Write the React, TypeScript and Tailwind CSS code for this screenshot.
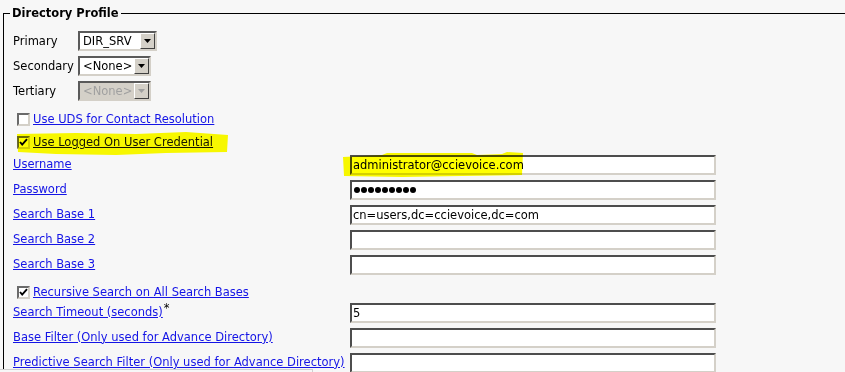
import React from "react";

const LINK = "text-[#1414e6] underline underline-offset-[1px] decoration-[1px]";

function Check({ checked }: { checked?: boolean }) {
  return (
    <div className="w-[13px] h-[13px] box-border border-2 border-t-[#6a6a6a] border-l-[#6a6a6a] border-b-[#d4d0c8] border-r-[#d4d0c8] bg-white flex items-center justify-center shrink-0">
      {checked && (
        <svg width="9" height="9" viewBox="0 0 9 9">
          <path d="M1 4 L3.2 6.6 L8 1.2" fill="none" stroke="#000" strokeWidth="1.9" />
        </svg>
      )}
    </div>
  );
}

function Select({ value, width, disabled }: { value: string; width: string; disabled?: boolean }) {
  return (
    <div
      className={`${width} h-[20px] box-border border-2 border-t-[#5a5a5a] border-l-[#5a5a5a] border-b-[#d4d0c8] border-r-[#d4d0c8] flex items-stretch ${
        disabled ? "bg-[#d4d0c8]" : "bg-white"
      }`}
    >
      <div className={`flex-1 pl-[3px] leading-[16px] whitespace-nowrap overflow-hidden ${disabled ? "text-[#a0a0a0]" : "text-black"}`}>{value}</div>
      <div className="w-[15px] box-border border border-t-white border-l-white border-b-[#404040] border-r-[#404040] bg-[#d4d0c8] flex items-center justify-center shrink-0">
        <svg width="7" height="4" viewBox="0 0 7 4">
          <path d="M0 0 H7 L3.5 4 Z" fill={disabled ? "#a0a0a0" : "#000"} />
        </svg>
      </div>
    </div>
  );
}

function Field({ label, star, children }: { label: string; star?: boolean; children?: React.ReactNode }) {
  return (
    <div className="flex h-[25px] items-start">
      <div className="w-[337px] pt-[1px] whitespace-nowrap">
        <span className={LINK}>{label}</span>
        {star && <span className="relative top-[-4px] text-black ml-[1px]">*</span>}
      </div>
      <div className="w-[366px] h-[20px] box-border border-2 border-t-[#4d4d4d] border-l-[#4d4d4d] border-b-[#d4d0c8] border-r-[#d4d0c8] bg-white pl-[1px] leading-[16px] text-black">
        {children}
      </div>
    </div>
  );
}

export default function App() {
  return (
    <div
      className="w-[845px] h-[372px] bg-[#f7f7f7] overflow-hidden relative text-[11.5px] text-black"
      style={{ fontFamily: '"DejaVu Sans", Verdana, sans-serif' }}
    >
      <fieldset className="mt-[5px] ml-[3px] w-[900px] border border-black pl-[9px] pb-[40px]">
        <legend className="ml-[-3px] px-[2px] font-bold text-[11.5px] leading-[16px]">Directory Profile</legend>

        <div className="mt-[10px] flex flex-col">
          <div className="flex h-[25px] items-start">
            <div className="w-[65px] leading-[20px]">Primary</div>
            <Select value="DIR_SRV" width="w-[79px]" />
          </div>
          <div className="flex h-[25px] items-start">
            <div className="w-[65px] leading-[20px]">Secondary</div>
            <Select value="<None>" width="w-[73px]" />
          </div>
          <div className="flex h-[25px] items-start">
            <div className="w-[65px] leading-[20px]">Tertiary</div>
            <Select value="<None>" width="w-[73px]" disabled />
          </div>

          <div className="flex items-center h-[24px] pl-[4px] pt-[3px] gap-[3px]">
            <Check />
            <span className={LINK}>Use UDS for Contact Resolution</span>
          </div>
          <div className="flex items-center h-[25px] pl-[4px] gap-[3px]">
            <Check checked />
            <span className={LINK}>Use Logged On User Credential</span>
          </div>

          <Field label="Username">administrator@ccievoice.com</Field>
          <Field label="Password">
            <div className="flex gap-[1px] items-center h-full pl-[1px]">
              {Array.from({ length: 9 }).map((_, i) => (
                <span key={i} className="w-[6px] h-[6px] rounded-full bg-black" />
              ))}
            </div>
          </Field>
          <Field label="Search Base 1">cn=users,dc=ccievoice,dc=com</Field>
          <Field label="Search Base 2" />
          <Field label="Search Base 3" />

          <div className="flex items-center h-[23px] pl-[4px] pt-[2px] gap-[3px]">
            <Check checked />
            <span className={LINK}>Recursive Search on All Search Bases</span>
          </div>

          <Field label="Search Timeout (seconds)" star>
            5
          </Field>
          <Field label="Base Filter (Only used for Advance Directory)" />
          <Field label="Predictive Search Filter (Only used for Advance Directory)" />
        </div>
      </fieldset>

      {/* highlighter marks */}
      <svg
        className="absolute left-[16px] top-[131px] mix-blend-multiply pointer-events-none"
        width="214"
        height="25"
        viewBox="0 0 214 25"
      >
        <path
          d="M1 3 L60 2 L120 3 L170 1 L212 4 L211 21 L150 22 L100 24 L40 23 L2 21 Z"
          fill="#ffff00"
        />
      </svg>
      <svg
        className="absolute left-[342px] top-[151px] mix-blend-multiply pointer-events-none"
        width="182"
        height="27"
        viewBox="0 0 182 27"
      >
        <path
          d="M1 6 L40 4 L45 2 L130 2 L135 4 L160 3 L165 1 L181 2 L180 24 L120 25 L60 26 L2 25 Z"
          fill="#ffff00"
        />
      </svg>

      <div className="absolute left-0 top-[369px] w-[313px] h-[10px] bg-[#f7f7f7] border-t border-r border-[#d0d0d0]" />
    </div>
  );
}
